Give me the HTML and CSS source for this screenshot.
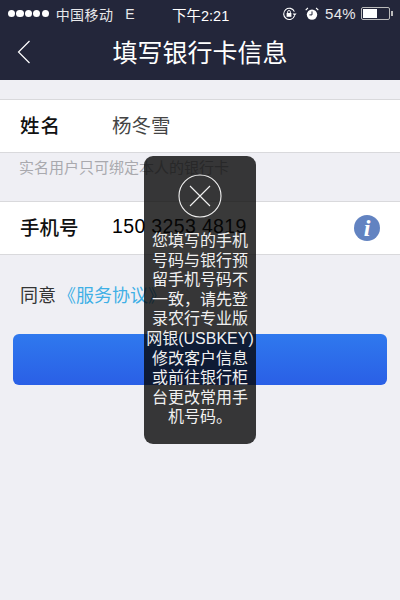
FILE: index.html
```html
<!DOCTYPE html>
<html lang="zh">
<head>
<meta charset="utf-8">
<title>填写银行卡信息</title>
<link rel="stylesheet" href="styles.css">
</head>
<body>
<div class="screen">
  <header class="top">
    <div class="status">
      <div class="status-left">
        <span class="dots"><i></i><i></i><i></i><i></i><i></i></span>
        <span class="carrier">中国移动</span>
        <span class="net">E</span>
      </div>
      <div class="time">下午2:21</div>
      <div class="status-right">
        <svg class="ico-lock" width="16" height="14" viewBox="0 0 16 14">
          <path d="M12.6 8.6A5.6 5.6 0 1 1 12.4 4.6" fill="none" stroke="#fff" stroke-width="1.1"/>
          <path d="M10.6 6.6h4l-2 2.4z" fill="#fff"/>
          <rect x="4.6" y="6" width="4.8" height="3.8" fill="#fff"/>
          <path d="M5.6 6V4.9a1.4 1.4 0 0 1 2.8 0V6" fill="none" stroke="#fff" stroke-width=".9"/>
        </svg>
        <svg class="ico-alarm" width="14" height="14" viewBox="0 0 14 14">
          <circle cx="7" cy="7.6" r="5.2" fill="#fff"/>
          <path d="M7 4.4v3.5H4.4" fill="none" stroke="#23263a" stroke-width="1"/>
          <path d="M.7 3.1 2.9 1M13.3 3.1 11.1 1" stroke="#fff" stroke-width="1.2"/>
        </svg>
        <span class="pct">54%</span>
        <span class="battery"><span class="level"></span></span>
        <span class="cap"></span>
      </div>
    </div>
    <div class="nav">
      <svg class="back" width="14" height="24" viewBox="0 0 14 24">
        <path d="M12.5 1 1.5 12l11 11" fill="none" stroke="#fff" stroke-width="1.2"/>
      </svg>
      <h1 class="title">填写银行卡信息</h1>
    </div>
  </header>

  <main class="content">
    <div class="row">
      <span class="label label-wide">姓名</span>
      <span class="value">杨冬雪</span>
    </div>
    <p class="hint">实名用户只可绑定本人的银行卡</p>
    <div class="row">
      <span class="label">手机号</span>
      <span class="value phone">150 3253 4819</span>
      <span class="info">i</span>
    </div>
    <p class="agree">同意 <a class="link">《服务协议》</a></p>
    <div class="button"></div>
  </main>

  <div class="toast">
    <svg class="close" width="44" height="44" viewBox="0 0 44 44">
      <circle cx="22" cy="22" r="21" fill="none" stroke="#f2f2f2" stroke-width="1.1"/>
      <path d="M12 12 32 32M32 12 12 32" stroke="#f2f2f2" stroke-width="1.1"/>
    </svg>
    <p class="msg">您填写的手机<br>号码与银行预<br>留手机号码不<br>一致，请先登<br>录农行专业版<br>网银(USBKEY)<br>修改客户信息<br>或前往银行柜<br>台更改常用手<br>机号码。</p>
  </div>
</div>
</body>
</html>
```
FILE: styles.css
```css
* { box-sizing: border-box; }
html, body { margin: 0; padding: 0; }
body {
  width: 400px;
  height: 600px;
  overflow: hidden;
  font-family: "Liberation Sans", "Noto Sans CJK SC", sans-serif;
}
.screen {
  position: relative;
  width: 400px;
  height: 600px;
  background: #efeff4;
}
.top {
  height: 80px;
  background: #23263a;
  color: #fff;
}
.status {
  position: relative;
  height: 27px;
  padding: 0 8px;
  display: flex;
  justify-content: space-between;
  align-items: center;
  font-size: 14px;
  color: #e8e8ea;
}
.status-left { display: flex; align-items: center; }
.dots { display: flex; gap: 1.2px; margin-right: 7px; }
.dots i {
  display: block;
  width: 7.2px;
  height: 7.2px;
  border-radius: 50%;
  background: #fff;
}
.carrier { letter-spacing: .4px; }
.net { margin-left: 12px; }
.time {
  position: absolute;
  left: 172px;
  top: 4px;
  font-size: 14.5px;
  color: #fff;
}
.status-right { display: flex; align-items: center; margin-right: -1px; }
.ico-alarm { margin-left: 7px; }
.pct { margin-left: 6px; font-size: 15px; letter-spacing: .3px; }
.battery {
  margin-left: 5px;
  width: 29px;
  height: 13px;
  border: 1px solid #bbb;
  border-radius: 2px;
  padding: 1px;
  display: block;
}
.level { display: block; width: 14px; height: 9px; background: #fff; }
.cap { width: 2px; height: 5px; background: #bbb; margin-left: 1px; }
.nav {
  position: relative;
  height: 53px;
  display: flex;
  justify-content: center;
  align-items: center;
}
.back { position: absolute; left: 17px; top: 13px; }
.title {
  margin: 0 0 2px;
  font-size: 25px;
  line-height: 48px;
  font-weight: 400;
  color: #fff;
}
.content { padding-top: 19px; }
.row {
  height: 54px;
  background: #fff;
  border-top: 1px solid #d9d9dc;
  border-bottom: 1px solid #d9d9dc;
  padding: 0 20px 3px;
  display: flex;
  align-items: center;
  position: relative;
}
.label {
  width: 92px;
  font-size: 19.5px;
  color: #111;
  font-weight: 500;
}
.label-wide { letter-spacing: 1px; }
.value {
  font-size: 19.5px;
  color: #444;
}
.phone { color: #000; letter-spacing: .35px; }
.hint {
  margin: 0;
  height: 48px;
  padding: 6px 19px 0;
  font-size: 15px;
  line-height: 18px;
  color: #a9a9ae;
}
.info {
  position: absolute;
  right: 20px;
  top: 13px;
  width: 26px;
  height: 26px;
  border-radius: 50%;
  background: #6283c1;
  color: #fff;
  font-family: "Liberation Serif", serif;
  font-style: italic;
  font-weight: 700;
  font-size: 24px;
  line-height: 26px;
  text-align: center;
}
.agree {
  margin: 0;
  padding: 29px 20px 0;
  height: 79px;
  font-size: 18px;
  line-height: 24px;
  color: #333;
}
.link { color: #3fb0e6; margin-left: -3px; }
.button {
  margin: 0 13px;
  height: 51px;
  border-radius: 6px;
  background: linear-gradient(#2f79ee, #2a5fe6);
}
.toast {
  position: absolute;
  left: 144px;
  top: 156px;
  width: 112px;
  height: 288px;
  border-radius: 9px;
  background: rgba(8, 8, 8, .8);
  padding-top: 18px;
  display: flex;
  flex-direction: column;
  align-items: center;
}
.close { flex: none; }
.msg {
  margin: 13px 0 0;
  width: 112px;
  font-size: 16px;
  line-height: 19.6px;
  color: #f0f0f0;
  text-align: center;
  white-space: nowrap;
}
```
